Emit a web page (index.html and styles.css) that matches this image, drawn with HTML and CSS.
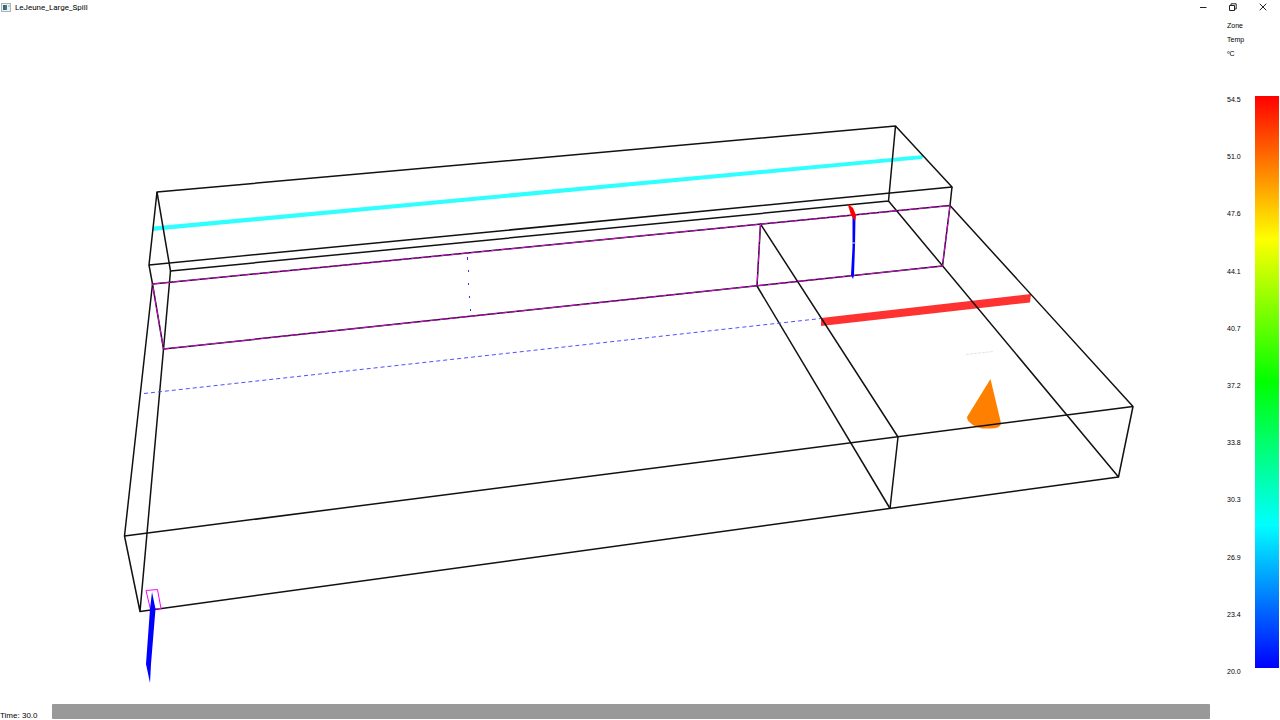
FILE: index.html
```html
<!DOCTYPE html>
<html lang="en">
<head>
<meta charset="utf-8">
<title>LeJeune_Large_Spill</title>
<link rel="stylesheet" href="styles.css">
</head>
<body>
<header class="titlebar">
  <svg class="app-icon" viewBox="0 0 12 10" aria-hidden="true">
    <rect x="1.5" y=".5" width="9" height="8" fill="#edf1f4" stroke="#aab3ba"/>
    <rect x="3" y="2" width="4" height="5" fill="#39816f"/>
    <path d="M3 2h2v5H3z" fill="#3c5f86"/>
    <path d="M9 2v2" stroke="#8db5a5"/>
  </svg>
  <h1 class="title">LeJeune_Large_Spill</h1>
  <div class="controls">
    <button class="control" type="button" aria-label="Minimize"><svg viewBox="0 0 8 8"><path d="M1 4.500h6.500"/></svg></button>
    <button class="control" type="button" aria-label="Restore"><svg viewBox="0 0 8 8"><path d="M.5 2.500h5v5h-5zM2 2.500V.8h5.200v5.200H5.500"/></svg></button>
    <button class="control" type="button" aria-label="Close"><svg viewBox="0 0 8 8"><path d="M.7.7l6.600 6.600M7.300.7L.7 7.300"/></svg></button>
  </div>
</header>
<main class="viewer">
  <svg class="scene" viewBox="0 15 1210 689" role="img" aria-label="Wireframe zone model">
    <path class="upper-layer" d="M153 226.500L924 155l-2 4L152 231z"/>
    <path class="hot-layer" d="M821 318L1031 294l-1 8.500L821 326z"/>
    <path class="fire" d="M990.500 379L1001 423q0 5-9 5.500h-10q-8-2-11-5q-4-3-4-6.500z"/>
    <g class="edges">
      <path d="M157 192L895.500 126L952 187L149 265z"/>
      <path d="M157 192L170.500 271L888.500 201L895.500 126M888.500 201L1118.500 477L1133 406.500L950 205.500L952 187"/>
      <path d="M149 265L152.500 284L124.500 536L140 611.500L170.500 271"/>
      <path d="M124.500 536L1133 406.500M140 611.500L1118.500 477"/>
      <path d="M152.500 284L950 205.500L942.500 266L163.500 349z"/>
      <path d="M757 286L760.500 224L898 437L890 508.500"/>
      <path d="M757 286L890 508.500"/>
    </g>
    <g class="partition">
      <path d="M152.500 284L950 205.500L942.500 266L163.500 349z"/>
      <path d="M760.500 224L757 286"/>
    </g>
    <path class="interface" d="M144 393.500L821 318.500"/>
    <path class="marks" d="M467.500 257v3M468.500 270v2M468.500 283v2M469.500 296v2M470.500 309v2"/>
    <path class="faint" d="M966 354.500L993 351.500"/>
    <path class="flow-blue" d="M852.500 216h3l-.5 30l-1 29l-1 4l-2-4l1.500-28z"/>
    <path class="flow-gap" d="M852 243h4"/>
    <path class="flow-red" d="M847.500 203.500L853 208l3 7l-1 6l-4-6z"/>
    <path class="vent" d="M146 590.500L157.500 589.500L161 608.500L150.500 609.500z"/>
    <path class="flow-blue" d="M152 592l3.500 17l-4.500 55l-1 19l-4-19l4-55z"/>
  </svg>
  <aside class="legend" aria-label="Zone temperature in degrees Celsius">
    <div class="legend-title"><span>Zone</span><span>Temp</span><span>ºC</span></div>
    <div class="scale">
      <div class="ticks">
        <span>54.5</span><span>51.0</span><span>47.6</span><span>44.1</span><span>40.7</span><span>37.2</span><span>33.8</span><span>30.3</span><span>26.9</span><span>23.4</span><span>20.0</span>
      </div>
      <div class="ramp"></div>
    </div>
  </aside>
</main>
<footer class="timeline">
  <label class="time" for="time">Time: 30.0</label>
  <input class="track" id="time" type="range" min="0" max="3600" value="30">
</footer>
</body>
</html>
```

FILE: styles.css
```css
* { box-sizing: border-box; }

body {
  display: flex;
  flex-direction: column;
  height: 100vh;
  margin: 0;
  overflow: hidden;
  background: #fff;
  color: #000;
  font-family: "Liberation Sans", Arial, sans-serif;
}

.titlebar {
  display: flex;
  align-items: center;
  height: 15px;
}

.app-icon {
  width: 12px;
  height: 10px;
  margin-right: 3px;
}

.title {
  margin: 0;
  font: 400 8px/15px Roboto, "Noto Sans", sans-serif;
}

.controls {
  display: flex;
  margin-left: auto;
  padding: 0 2px 1px 0;
}

.control {
  display: grid;
  place-items: center;
  width: 30px;
  height: 14px;
  padding: 0;
  border: 0;
  background: none;
}

.control svg {
  width: 8px;
  height: 8px;
  fill: none;
  stroke: #222;
  stroke-width: 1;
}

.viewer {
  display: flex;
  flex: 1;
  min-height: 0;
}

.scene {
  flex: 1;
  min-width: 0;
  height: 100%;
  fill: none;
}

.edges { stroke: #111; stroke-width: 1.5; stroke-linejoin: round; }
.partition { stroke: #e000e0; stroke-width: 1; stroke-dasharray: 8 2; }
.upper-layer { fill: #30ffff; }
.hot-layer { fill: #ff3232; }
.fire { fill: #ff8000; }
.interface { stroke: #5050ff; stroke-width: 1; stroke-dasharray: 4 3; }
.marks { stroke: #3030ff; stroke-width: 1; }
.faint { stroke: #e4e4e4; stroke-width: 1; stroke-dasharray: 3 1; }
.flow-blue { fill: #00f; }
.flow-red { fill: #f00; }
.flow-gap { stroke: #dde; stroke-width: 1; }
.vent { stroke: #f0f; stroke-width: 1; }

.legend {
  display: flex;
  flex-direction: column;
  width: 70px;
  padding: 4px 1px 28px 17px;
  font-size: 7px;
  line-height: 8px;
}

.legend-title {
  display: flex;
  flex-direction: column;
  margin-bottom: 35px;
  line-height: 14px;
}

.scale {
  display: flex;
  flex: 1;
  justify-content: space-between;
}

.ticks {
  display: flex;
  flex-direction: column;
  justify-content: space-between;
}

.ramp {
  width: 24px;
  margin-bottom: 8px;
  background: linear-gradient(#f00, #ff0 25%, #0f0 50%, #0ff 75%, #00f);
}

.timeline {
  display: flex;
  height: 16px;
  padding-right: 70px;
}

.time {
  width: 52px;
  padding-top: 7px;
  font-size: 8px;
  line-height: 9px;
}

.track {
  flex: 1;
  min-width: 0;
  height: 15px;
  margin: 0;
  border-radius: 1px;
  background: #999;
  appearance: none;
}

.track::-webkit-slider-thumb {
  width: 8px;
  height: 15px;
  background: transparent;
  appearance: none;
}
```
